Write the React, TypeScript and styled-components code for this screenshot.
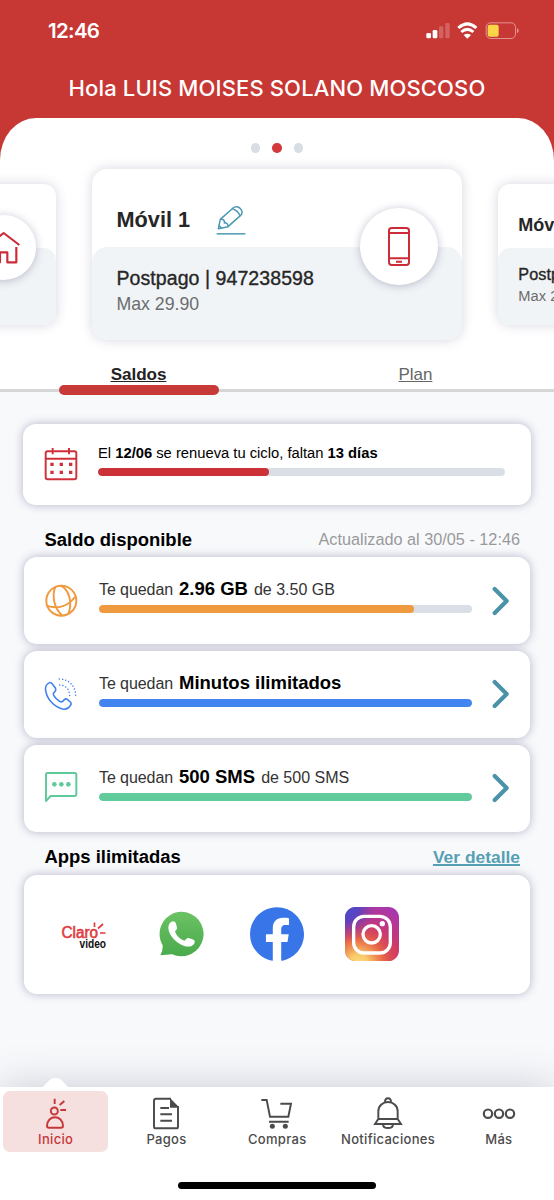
import React from 'react';
import styled, { createGlobalStyle } from 'styled-components';

const GlobalStyle = createGlobalStyle`
  *, *::before, *::after { box-sizing: border-box; }
  body { margin: 0; background: #f8f9fb; }
  svg { display: block; flex: none; }
`;

const sans = `"Liberation Sans", Arial, sans-serif`;
const system = `Inter, "Liberation Sans", sans-serif`;

const Screen = styled.div`
  width: 554px;
  height: 1200px;
  display: flex;
  flex-direction: column;
  overflow: hidden;
  background: #f8f9fb;
  font-family: ${sans};
  white-space: nowrap;
`;

/* ---------- header ---------- */

const Header = styled.header`
  background: #c73835;
  flex: none;
`;

const StatusBar = styled.div`
  height: 60px;
  padding: 1px 29px 0 48px;
  display: flex;
  align-items: center;
  justify-content: space-between;
`;

const Clock = styled.span`
  font: 600 20.5px/24px ${system};
  letter-spacing: -0.7px;
  color: #fff;
`;

const Greeting = styled.h1`
  margin: 0;
  height: 58px;
  padding-top: 14px;
  text-align: center;
  font: 500 22px/28px ${system};
  letter-spacing: 0.14px;
  color: #fff;
`;

const Sheet = styled.section`
  height: 274px;
  display: flex;
  flex-direction: column;
  background: #fff;
  border-radius: 36px 36px 0 0 / 42px 42px 0 0;
  border-bottom: 3px solid #d5d6d7;
`;

const Dots = styled.div`
  height: 51px;
  padding-top: 25px;
  display: flex;
  justify-content: center;
  gap: 12px;
`;

const Dot = styled.i<{ $on?: boolean }>`
  width: 9.5px;
  height: 9.5px;
  border-radius: 50%;
  background: ${(p) => (p.$on ? '#d23a3c' : '#d9dee4')};
`;

const Carousel = styled.div`
  display: flex;
  align-items: center;
  justify-content: center;
  gap: 36px;
  height: 171px;
`;

const LineCard = styled.article<{ $scale: number }>`
  position: relative;
  flex: none;
  font-size: ${(p) => p.$scale * 10}px;
  width: 37em;
  height: 17.1em;
  display: flex;
  flex-direction: column;
  border-radius: 1.5em;
  background: #fff;
  box-shadow: 0 0 12px rgba(70, 70, 120, 0.22);
`;

const LineTop = styled.div`
  height: 7.8em;
  padding: 2.3em 2.4em 0 2.45em;
  display: flex;
  align-items: center;
  gap: 2.6em;
`;

const LineName = styled.strong`
  font-size: 2.17em;
  color: #262626;
`;

const LineBottom = styled.div`
  flex: 1;
  padding: 1.9em 2.4em 0 2.45em;
  border-radius: 1.5em;
  background: #f1f4f6;
`;

const LineNumber = styled.div`
  font-size: 1.955em;
  line-height: 1.3;
  letter-spacing: 0.003em;
  color: #262626;
  -webkit-text-stroke: 0.35px #262626;
`;

const LinePlan = styled.div`
  font-size: 1.77em;
  line-height: 1.58;
  color: #6b6c6e;
`;

const LineBadge = styled.div`
  position: absolute;
  right: 2.45em;
  top: 3.85em;
  width: 7.75em;
  height: 7.75em;
  border-radius: 50%;
  display: flex;
  align-items: center;
  justify-content: center;
  background: #fff;
  box-shadow: 0 1px 8px rgba(60, 60, 110, 0.32);
`;

const Tabs = styled.nav`
  flex: 1;
  display: grid;
  grid-template-columns: 1fr 1fr;
`;

const Tab = styled.a<{ $active?: boolean }>`
  position: relative;
  padding-top: 25px;
  text-align: center;
  font-size: ${(p) => (p.$active ? 17.1 : 17)}px;
  line-height: 20px;
  letter-spacing: -0.05px;
  font-weight: ${(p) => (p.$active ? 700 : 400)};
  color: ${(p) => (p.$active ? '#222' : '#666')};
  text-decoration: underline;
  text-decoration-thickness: 1px;
  text-underline-offset: 1px;
`;

const TabMarker = styled.i`
  position: absolute;
  left: 58.5px;
  bottom: -5.5px;
  width: 160.5px;
  height: 9.5px;
  border-radius: 5px;
  background: #c73a38;
`;

/* ---------- content ---------- */

const Main = styled.main`
  flex: 1;
  padding: 32px 23px 0;
`;

const Card = styled.div`
  display: flex;
  border-radius: 13px;
  background: #fff;
  box-shadow: 0 0 10px rgba(60, 60, 110, 0.36);
`;

const CycleCard = styled(Card)`
  height: 81px;
  padding: 23px 26.5px 0 20.5px;
  gap: 20.5px;
`;

const CycleBody = styled.div`
  flex: 1;
`;

const CycleText = styled.div`
  font-size: 14.75px;
  line-height: 13px;
  margin-bottom: 8px;
  color: #000;
`;

const Track = styled.div`
  height: 8px;
  border-radius: 4px;
  overflow: hidden;
  background: #d9dfe4;
`;

const Fill = styled.div<{ $color: string }>`
  height: 100%;
  border-radius: 4px;
  background: ${(p) => p.$color};
`;

const SectionHead = styled.div<{ $top: number }>`
  height: 22px;
  margin-top: ${(p) => p.$top}px;
  margin-bottom: 7px;
  padding: 1px 11px 0 21.5px;
  display: flex;
  align-items: center;
  justify-content: space-between;
`;

const SectionTitle = styled.h2`
  margin: 0;
  font-size: 18.45px;
  line-height: 22px;
  color: #000;
`;

const Updated = styled.span`
  font-size: 16.25px;
  color: #98999b;
`;

const DetailLink = styled.a`
  font-size: 17.4px;
  font-weight: 700;
  color: #55a0b4;
  text-decoration: underline;
  text-decoration-thickness: 1.5px;
  text-underline-offset: 1px;
`;

const Balances = styled.div`
  display: flex;
  flex-direction: column;
  gap: 6.8px;
  padding: 0 1px;
`;

const BalanceCard = styled(Card)`
  height: 87px;
  padding: 0 20px;
  align-items: center;
`;

const BalanceBody = styled.div`
  width: 373px;
  margin: 0 20px 0 21px;
  padding-bottom: 10px;
`;

const BalanceText = styled.div`
  display: flex;
  align-items: baseline;
  gap: 6px;
  font-size: 16px;
  line-height: 22px;
  margin-bottom: 4px;
  color: #333;

  span:first-child {
    letter-spacing: -0.08px;
  }

  strong {
    font-size: 18.5px;
    color: #000;
  }
`;

const AppsCard = styled(Card)`
  height: 119px;
  margin: 0 1px;
  padding-left: 35px;
  align-items: center;
`;

const AppSlot = styled.div<{ $width: number }>`
  width: ${(p) => p.$width}px;
  display: flex;
`;

/* ---------- bottom bar ---------- */

const BottomBar = styled.footer`
  position: relative;
  flex: none;
  height: 113px;
  background: #fff;
  box-shadow: 0 0 42px rgba(70, 75, 110, 0.26);
  display: flex;
  flex-direction: column;
  align-items: center;
`;

const Bump = styled.svg`
  position: absolute;
  left: 41px;
  top: -9px;
`;

const NavRow = styled.nav`
  width: 100%;
  padding-top: 4px;
  display: grid;
  grid-template-columns: repeat(5, 1fr);
`;

const NavItem = styled.a<{ $active?: boolean }>`
  height: 60.5px;
  margin: 0 2.5px 0 3px;
  padding-top: 6px;
  display: flex;
  flex-direction: column;
  align-items: center;
  border-radius: 7px;
  background: ${(p) => (p.$active ? '#f6dfdf' : 'transparent')};
  color: ${(p) => (p.$active ? '#c5383a' : '#4b4b4b')};
  font: 500 13px/16px ${system};
  letter-spacing: 0.3px;
`;

const HomeIndicator = styled.i`
  width: 198px;
  height: 7px;
  margin-top: 30.5px;
  border-radius: 4px;
  background: #000;
`;

/* ---------- icons ---------- */

type IconProps = { color?: string; size?: number; width?: number; children: React.ReactNode };

const Icon = ({ color = 'currentColor', size = 34, width = 5.8, children }: IconProps) => (
  <svg width={size} height={size} viewBox="0 0 102 102" fill="none" stroke={color} strokeWidth={width}>
    {children}
  </svg>
);

const StatusIcons = () => (
  <svg width="99" height="18" viewBox="0 0 297 54">
    <g fill="#fff">
      <rect x="1" y="33" width="14" height="16" rx="4" />
      <rect x="20" y="24" width="14" height="25" rx="4" />
      <rect x="39" y="13" width="13" height="36" rx="4" opacity=".22" />
      <rect x="58" y="3" width="13" height="46" rx="4" opacity=".22" />
      <path d="M124 50 L113 39 Q124 31 135 39 Z" />
    </g>
    <g fill="none" stroke="#fff" strokeWidth="9">
      <path d="M97 18 Q124 -7 151 18" />
      <path d="M106 30 Q124 14 142 30" />
    </g>
    <rect x="180.500" y="2.500" width="88" height="47" rx="13" fill="none" stroke="#fff" strokeOpacity=".45" strokeWidth="3" />
    <rect x="185" y="8" width="33" height="36" rx="6" fill="#fbd545" />
    <path d="M273 19 Q278 20 278 26 Q278 32 273 33 Z" fill="#fff" opacity=".5" />
  </svg>
);

const Pencil = () => (
  <svg width="30" height="30" viewBox="0 0 90 90" fill="none" stroke="#4b9ab2" strokeWidth="4.500" strokeLinejoin="round">
    <path d="M7 71 L13 43 L51 9 C58 2 69 5 74 12 C80 19 79 27 74 31 L36 65 Z" />
    <path d="M13 43 C22 42 27 47 25 54 C31 52 36 57 36 65 M49 11 C58 14 68 22 72 32 M9 62 L17 69" />
    <path d="M2 86.500 H88" />
  </svg>
);

const House = () => (
  <Icon color="#cc2c38" width={6.5}>
    <path d="M4 42 L50 6 L97 42 M12 48 V94 H39 V64 H61 V94 H88 V48" strokeLinejoin="round" />
  </Icon>
);

const Handset = () => (
  <svg width="22" height="39" viewBox="0 0 66 117" fill="none" stroke="#cc2c38" strokeWidth="6">
    <rect x="3" y="3" width="60" height="111" rx="8" />
    <path d="M3 18 H63 M3 94 H63 M24 104 H42" />
  </svg>
);

const Calendar = () => (
  <Icon color="#cf3039">
    <rect x="5" y="13" width="92" height="84" rx="6" />
    <path d="M5 35 H97 M26 3 V22 M75 3 V22" />
    <path d="M19 52 H29 M47 52 H57 M75 52 H85 M19 76 H29 M47 76 H57 M75 76 H85" strokeWidth="10" />
  </Icon>
);

const Globe = () => (
  <Icon color="#ef9a3f">
    <circle cx="52" cy="50" r="45" />
    <path d="M34 9 C22 38 32 74 54 94 M49 5 C76 16 86 56 73 90 M8 65 C42 78 76 64 93 38" />
  </Icon>
);

const Call = () => (
  <Icon color="#3f7fee" width={4.6}>
    <path d="M5 40 C3 28 10 20 17 17 C20 16 23 18 25 21 L34 33 C36 37 36 40 33 43 L29 48 C26 52 32 60 38 66 C44 72 52 77 56 73 L61 68 C64 65 67 65 70 67 L79 75 C82 78 82 81 80 84 C74 94 66 98 56 96 C30 90 8 65 5 40 Z" />
    <path d="M46 6 C74 6 95 27 95 56 M47 24 C64 24 77 37 77 56" strokeDasharray="0.1 9.500" strokeLinecap="round" strokeWidth="4.500" />
  </Icon>
);

const Message = () => (
  <Icon color="#5fc99a">
    <path d="M6 90 V11 Q6 6 11 6 H92 Q97 6 97 11 V70 Q97 75 92 75 H20 Z" strokeLinejoin="round" />
    <g fill="#5fc99a" stroke="none">
      <circle cx="31" cy="40" r="7" />
      <circle cx="52" cy="40" r="7" />
      <circle cx="73" cy="40" r="7" />
    </g>
  </Icon>
);

const Chevron = () => (
  <svg width="18" height="30" viewBox="0 0 54 90" fill="none" stroke="#4a92a8" strokeWidth="12.500" strokeLinecap="round" strokeLinejoin="round">
    <path d="M8 9 L44 45 L8 81" />
  </svg>
);

const ClaroVideo = () => (
  <svg width="48" height="32" viewBox="0 0 48 32">
    <text x="2.500" y="20" fontFamily="Liberation Sans, sans-serif" fontSize="16" fill="#e03a3c" stroke="#e03a3c" strokeWidth=".6" textLength="36.500" lengthAdjust="spacingAndGlyphs">Claro</text>
    <text x="20.500" y="29.500" fontFamily="Liberation Sans, sans-serif" fontSize="12" fontWeight="700" fill="#111" textLength="26.500" lengthAdjust="spacingAndGlyphs">video</text>
    <path d="M35.500 4.500 V9 M39 10.500 L44 6 M41 15 H46.500" stroke="#e03a3c" strokeWidth="1.700" />
  </svg>
);

const WhatsApp = () => (
  <svg width="46" height="46" viewBox="0 0 138 138">
    <defs>
      <linearGradient id="wa" x1="0" y1="0" x2="0" y2="1">
        <stop offset="0" stopColor="#6bc264" />
        <stop offset="1" stopColor="#4aaa4c" />
      </linearGradient>
    </defs>
    <path d="M70 2 A67 67 0 1 1 42 130 L7 133 Q15 120 14 103 A67 67 0 0 1 70 2 Z" fill="url(#wa)" />
    <path d="M40 32 C46 28 53 32 54 38 L57 50 C58 55 53 58 51 61 C54 73 67 86 79 89 C83 86 87 80 92 81 L107 86 C112 89 111 96 106 101 C98 109 84 108 70 101 C49 91 31 68 31 50 C31 41 35 35 40 32 Z" fill="#fff" />
  </svg>
);

const Facebook = () => (
  <svg width="54" height="54" viewBox="0 0 24 24">
    <path
      fill="#3875e8"
      d="M24 12.073c0-6.627-5.373-12-12-12s-12 5.373-12 12c0 5.990 4.388 10.954 10.125 11.854v-8.385H7.078v-3.470h3.047V9.430c0-3.007 1.792-4.669 4.533-4.669 1.312 0 2.686.235 2.686.235v2.953H15.830c-1.491 0-1.956.925-1.956 1.874v2.250h3.328l-.532 3.470h-2.796v8.385C19.612 23.027 24 18.062 24 12.073z"
    />
  </svg>
);

const Instagram = () => (
  <svg width="54" height="54" viewBox="0 0 162 162">
    <defs>
      <linearGradient id="igBase" x1="0.200" y1="1" x2="0.800" y2="0">
        <stop offset="0" stopColor="#d83b50" />
        <stop offset=".5" stopColor="#cf3768" />
        <stop offset="1" stopColor="#a637b0" />
      </linearGradient>
      <radialGradient id="igWarm" cx="0.250" cy="1.050" r="0.850">
        <stop offset="0" stopColor="#fbdc7c" />
        <stop offset=".2" stopColor="#f8cb69" />
        <stop offset=".55" stopColor="#ea6a43" stopOpacity=".9" />
        <stop offset="1" stopColor="#d23a60" stopOpacity="0" />
      </radialGradient>
      <radialGradient id="igCool" cx="0" cy="0" r="0.650">
        <stop offset="0" stopColor="#4450cc" />
        <stop offset=".4" stopColor="#5c42c0" />
        <stop offset="1" stopColor="#a038a8" stopOpacity="0" />
      </radialGradient>
    </defs>
    <rect width="162" height="162" rx="32" fill="url(#igBase)" />
    <rect width="162" height="162" rx="32" fill="url(#igWarm)" />
    <rect width="162" height="162" rx="32" fill="url(#igCool)" />
    <g fill="none" stroke="#fff" strokeWidth="10">
      <rect x="26" y="28" width="110" height="110" rx="31" />
      <circle cx="80" cy="82" r="26" />
    </g>
    <circle cx="112" cy="50" r="8" fill="#fff" />
  </svg>
);

const Person = () => (
  <Icon>
    <circle cx="46" cy="42" r="10.500" />
    <path d="M24 87 C24 52 72 52 72 87 Q72 92 66 92 H30 Q24 92 24 87 Z M47 5 V21 M62 24 L76 12 M64 39 H81" />
  </Icon>
);

const Bill = () => (
  <Icon>
    <path d="M66 5 H21 Q15 5 15 11 V89 Q15 94 21 94 H82 Q87 94 87 89 V27" />
    <path d="M63 3 L89 29 V32 H63 Z" fill="currentColor" stroke="none" />
    <path d="M34 33 H60 M34 52 H69 M34 71 H69" />
  </Icon>
);

const Cart = () => (
  <Icon>
    <path d="M4 9 H20 L30 59 H85 L93 20 H61 M27 74 H86" />
    <circle cx="37" cy="88" r="7.500" fill="currentColor" stroke="none" />
    <circle cx="76" cy="88" r="7.500" fill="currentColor" stroke="none" />
  </Icon>
);

const Bell = () => (
  <Icon>
    <path d="M42 15 C42 0 60 0 60 15 M22 66 V43 C22 6 80 6 80 43 V66 L90 81 H12 L22 66 H80 M36 82 C37 97 65 97 66 82" />
  </Icon>
);

const More = () => (
  <Icon width={6.5}>
    <circle cx="18" cy="50" r="12.500" />
    <circle cx="51" cy="50" r="12.500" />
    <circle cx="84" cy="50" r="12.500" />
  </Icon>
);

/* ---------- page ---------- */

type LineProps = { scale: number; name: string; number: string; plan: string; badge: React.ReactNode; editable?: boolean };

const Line = ({ scale, name, number, plan, badge, editable }: LineProps) => (
  <LineCard $scale={scale}>
    <LineTop>
      <LineName>{name}</LineName>
      {editable && <Pencil />}
    </LineTop>
    <LineBottom>
      <LineNumber>{number}</LineNumber>
      <LinePlan>{plan}</LinePlan>
    </LineBottom>
    <LineBadge>{badge}</LineBadge>
  </LineCard>
);

const balances = [
  { icon: <Globe />, amount: '2.96 GB', total: 'de 3.50 GB', percent: 84.5, color: '#ef9a3f' },
  { icon: <Call />, amount: 'Minutos ilimitados', total: '', percent: 100, color: '#4284f0' },
  { icon: <Message />, amount: '500 SMS', total: 'de 500 SMS', percent: 100, color: '#62cb9c' },
];

const navItems = [
  { label: 'Inicio', icon: <Person /> },
  { label: 'Pagos', icon: <Bill /> },
  { label: 'Compras', icon: <Cart /> },
  { label: 'Notificaciones', icon: <Bell /> },
  { label: 'Más', icon: <More /> },
];

export default function App() {
  return (
    <>
      <GlobalStyle />
      <Screen>
        <Header>
          <StatusBar>
            <Clock>12:46</Clock>
            <StatusIcons />
          </StatusBar>
          <Greeting>Hola LUIS MOISES SOLANO MOSCOSO</Greeting>
          <Sheet>
            <Dots>
              <Dot />
              <Dot $on />
              <Dot />
            </Dots>
            <Carousel>
              <Line scale={0.83} name="" number="" plan="" badge={<House />} />
              <Line scale={1} name="Móvil 1" number="Postpago | 947238598" plan="Max 29.90" badge={<Handset />} editable />
              <Line scale={0.83} name="Móvil 2" number="Postpago" plan="Max 29.90" badge={<Handset />} />
            </Carousel>
            <Tabs>
              <Tab $active>
                Saldos
                <TabMarker />
              </Tab>
              <Tab>Plan</Tab>
            </Tabs>
          </Sheet>
        </Header>

        <Main>
          <CycleCard>
            <Calendar />
            <CycleBody>
              <CycleText>
                El <b>12/06</b> se renueva tu ciclo, faltan <b>13 días</b>
              </CycleText>
              <Track>
                <Fill $color="#cc3138" style={{ width: '42%' }} />
              </Track>
            </CycleBody>
          </CycleCard>

          <SectionHead $top={23}>
            <SectionTitle>Saldo disponible</SectionTitle>
            <Updated>Actualizado al 30/05 - 12:46</Updated>
          </SectionHead>
          <Balances>
            {balances.map((b) => (
              <BalanceCard key={b.amount}>
                {b.icon}
                <BalanceBody>
                  <BalanceText>
                    <span>Te quedan</span>
                    <strong>{b.amount}</strong>
                    <span>{b.total}</span>
                  </BalanceText>
                  <Track>
                    <Fill $color={b.color} style={{ width: `${b.percent}%` }} />
                  </Track>
                </BalanceBody>
                <Chevron />
              </BalanceCard>
            ))}
          </Balances>

          <SectionHead $top={14}>
            <SectionTitle>Apps ilimitadas</SectionTitle>
            <DetailLink>Ver detalle</DetailLink>
          </SectionHead>
          <AppsCard>
            <AppSlot $width={98.5}>
              <ClaroVideo />
            </AppSlot>
            <AppSlot $width={92.5}>
              <WhatsApp />
            </AppSlot>
            <AppSlot $width={95}>
              <Facebook />
            </AppSlot>
            <AppSlot $width={54}>
              <Instagram />
            </AppSlot>
          </AppsCard>
        </Main>

        <BottomBar>
          <Bump width="30" height="10" viewBox="0 0 30 10">
            <path d="M0 10 C5 8 7 0 14.500 0 C22 0 24 8 29 10 Z" fill="#fff" />
          </Bump>
          <NavRow>
            {navItems.map((item, i) => (
              <NavItem key={item.label} $active={i === 0}>
                {item.icon}
                {item.label}
              </NavItem>
            ))}
          </NavRow>
          <HomeIndicator />
        </BottomBar>
      </Screen>
    </>
  );
}
